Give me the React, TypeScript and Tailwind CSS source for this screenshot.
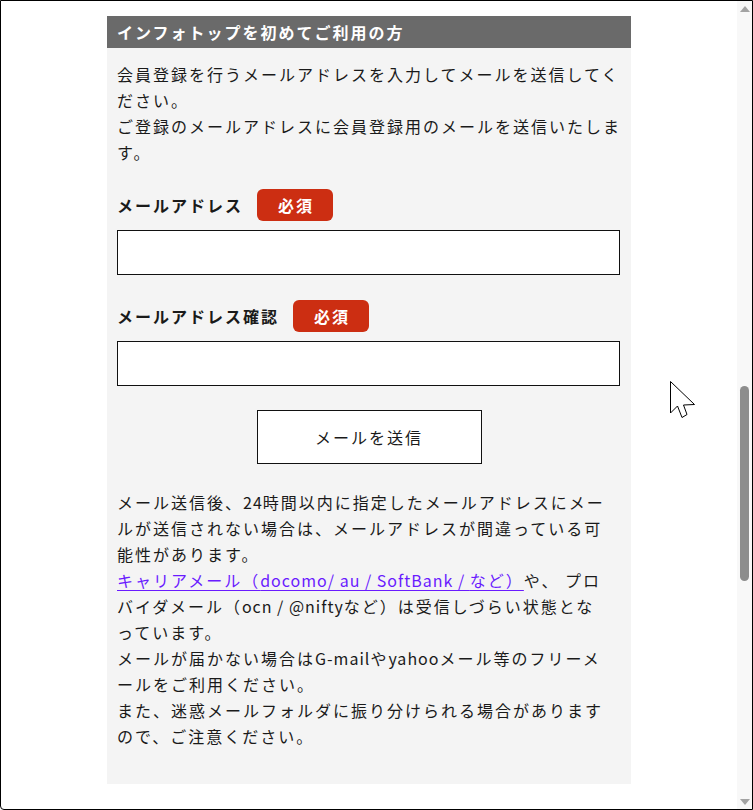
import React from "react";

function Badge() {
  return (
    <span className="inline-flex h-[32px] w-[76px] items-center justify-center rounded-[6px] bg-[#cc2e12] font-bold text-white leading-none tracking-[2px] pl-[2px]">
      必須
    </span>
  );
}

function L({ children }: { children: React.ReactNode }) {
  return <span className="tracking-[1px]">{children}</span>;
}

export default function App() {
  return (
    <div className="relative flex h-[810px] w-[753px] overflow-hidden rounded-bl-[4px] border border-black bg-white font-['Noto_Sans_CJK_JP','Noto_Sans',sans-serif] text-[16px] tracking-[2px] text-[#1a1a1a]">
      <div className="flex-1 pt-[15px]">
        <div className="mx-auto w-[524px] bg-[#f4f4f4]">
          <div className="h-[32px] bg-[#6a6a6a] px-[10px] font-bold leading-[32px] text-white">
            インフォトップを初めてご利用の方
          </div>
          <div className="pl-[10px] pr-[9px] pt-[13px] pb-[35px]">
            <p className="leading-[26px]">
              会員登録を行うメールアドレスを入力してメールを送信してください。
              <br />
              ご登録のメールアドレスに会員登録用のメールを送信いたします。
            </p>

            <div className="mt-[24px] flex items-center gap-[14px]">
              <span className="font-bold">メールアドレス</span>
              <Badge />
            </div>
            <input
              type="text"
              className="mt-[9px] block h-[45px] w-[503px] border border-[#111] bg-white outline-none"
            />

            <div className="mt-[25px] flex items-center gap-[14px]">
              <span className="font-bold">メールアドレス確認</span>
              <Badge />
            </div>
            <input
              type="text"
              className="mt-[9px] block h-[45px] w-[503px] border border-[#111] bg-white outline-none"
            />

            <div className="mt-[24px] flex justify-center pr-[1px]">
              <button className="h-[54px] w-[225px] border border-[#111] bg-white tracking-[2px] text-[#1a1a1a]">
                メールを送信
              </button>
            </div>

            <div className="mt-[25px] w-[492px] leading-[26px]">
              <p>
                メール送信後、<L>24</L>時間以内に指定したメールアドレスにメールが送信されない場合は、メールアドレスが間違っている可能性があります。
              </p>
              <p>
                <a href="#" className="text-[#6a1bff] underline underline-offset-[3px]">
                  キャリアメール（<L>docomo/ au / SoftBank / </L>など）
                </a>
                や、 プロバイダメール（<L>ocn / @nifty</L>など）は受信しづらい状態となっています。
              </p>
              <p>
                メールが届かない場合は<L>G-mail</L>や<L>yahoo</L>メール等のフリーメールをご利用ください。
              </p>
              <p>
                また、迷惑メールフォルダに振り分けられる場合がありますので、ご注意ください。
              </p>
            </div>
          </div>
        </div>
      </div>

      <div className="flex w-[15px] flex-col items-center bg-[#f8f8f8]">
        <svg width="10" height="6" viewBox="0 0 10 6" className="mt-[5px]">
          <polygon points="5,0 10,6 0,6" fill="#a3a3a3" />
        </svg>
        <div className="mt-[374px] h-[195px] w-[9px] rounded-full bg-[#8d8d8d]" />
        <div className="flex-1" />
        <svg width="10" height="6" viewBox="0 0 10 6" className="mb-[4px]">
          <polygon points="0,0 10,0 5,6" fill="#a3a3a3" />
        </svg>
      </div>

      <svg
        width="28"
        height="40"
        viewBox="0 0 28 40"
        className="pointer-events-none absolute left-[668px] top-[379px]"
      >
        <polygon
          points="1.5,1.5 1.5,33 8.5,26 13,37.5 18,34.5 14.5,25 25.5,24.5"
          fill="white"
          stroke="black"
          strokeWidth="1"
          strokeLinejoin="miter"
        />
      </svg>
    </div>
  );
}
